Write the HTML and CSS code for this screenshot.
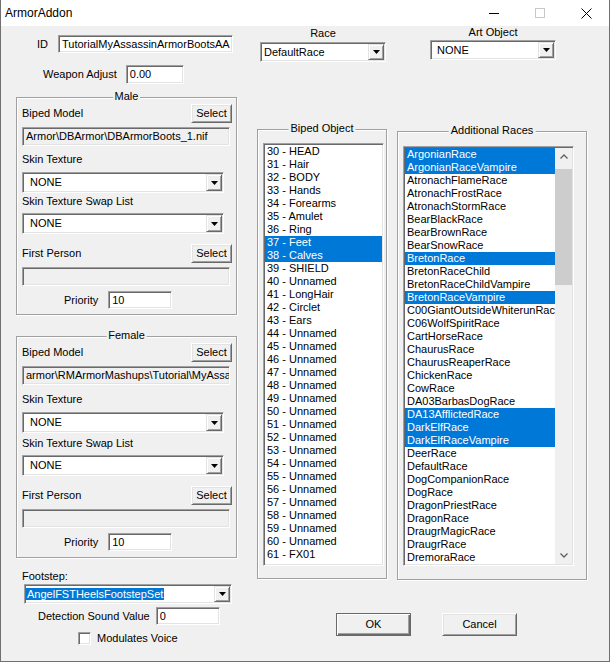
FILE: index.html
```html
<!DOCTYPE html>
<html lang="en">
<head>
    <meta charset="UTF-8">
    <title>ArmorAddon</title>
    <link rel="stylesheet" href="styles.css">
</head>
<body>
<div class="window">
    <div class="titlebar">
        <span class="title">ArmorAddon</span>
        <div class="caption">
            <span class="cap"><svg width="10" height="10" viewBox="0 0 10 10"><path d="M0 5.5h10" stroke="#000" stroke-width="1"/></svg></span>
            <span class="cap"><svg width="10" height="10" viewBox="0 0 10 10"><rect x="0.5" y="0.5" width="9" height="9" fill="none" stroke="#c8c8c8"/></svg></span>
            <span class="cap"><svg width="11" height="11" viewBox="0 0 11 11"><path d="M0.5 0.5L10.5 10.5M10.5 0.5L0.5 10.5" stroke="#000" stroke-width="1"/></svg></span>
        </div>
    </div>

    <div class="client">
        <div class="left">
            <div class="field-row id-row">
                <span>ID</span>
                <div class="edit edit-id">TutorialMyAssassinArmorBootsAA</div>
            </div>
            <div class="field-row weapon-row">
                <span>Weapon Adjust</span>
                <div class="edit edit-weapon">0.00</div>
            </div>

            <div class="group model-group">
                <span class="group-title">Male</span>
                <div class="head-row"><span>Biped Model</span><div class="btn btn-select">Select</div></div>
                <div class="edit path">Armor\DBArmor\DBArmorBoots_1.nif</div>
                <div class="sub-label">Skin Texture</div>
                <div class="combo combo-wide"><span class="combo-text">NONE</span><span class="drop"><svg width="7" height="4" viewBox="0 0 7 4"><path d="M0 0h7L3.5 4z"/></svg></span></div>
                <div class="sub-label sub-label-tight">Skin Texture Swap List</div>
                <div class="combo combo-wide combo-second"><span class="combo-text">NONE</span><span class="drop"><svg width="7" height="4" viewBox="0 0 7 4"><path d="M0 0h7L3.5 4z"/></svg></span></div>
                <div class="head-row head-row-fp"><span>First Person</span><div class="btn btn-select">Select</div></div>
                <div class="edit path"></div>
                <div class="field-row priority-row">
                    <span>Priority</span>
                    <div class="edit edit-priority">10</div>
                </div>
            </div>

            <div class="group model-group female">
                <span class="group-title">Female</span>
                <div class="head-row"><span>Biped Model</span><div class="btn btn-select">Select</div></div>
                <div class="edit path">armor\RMArmorMashups\Tutorial\MyAssassinArmorBoots_1.nif</div>
                <div class="sub-label">Skin Texture</div>
                <div class="combo combo-wide"><span class="combo-text">NONE</span><span class="drop"><svg width="7" height="4" viewBox="0 0 7 4"><path d="M0 0h7L3.5 4z"/></svg></span></div>
                <div class="sub-label sub-label-tight">Skin Texture Swap List</div>
                <div class="combo combo-wide combo-second"><span class="combo-text">NONE</span><span class="drop"><svg width="7" height="4" viewBox="0 0 7 4"><path d="M0 0h7L3.5 4z"/></svg></span></div>
                <div class="head-row head-row-fp"><span>First Person</span><div class="btn btn-select">Select</div></div>
                <div class="edit path"></div>
                <div class="field-row priority-row">
                    <span>Priority</span>
                    <div class="edit edit-priority">10</div>
                </div>
            </div>

            <div class="footstep-label">Footstep:</div>
            <div class="combo combo-foot"><span class="combo-text"><span class="hl">AngelFSTHeelsFootstepSet</span></span><span class="drop"><svg width="7" height="4" viewBox="0 0 7 4"><path d="M0 0h7L3.5 4z"/></svg></span></div>
            <div class="field-row detect-row">
                <span>Detection Sound Value</span>
                <div class="edit edit-priority">0</div>
            </div>
            <div class="check-row">
                <span class="check"></span>
                <span>Modulates Voice</span>
            </div>
        </div>

        <div class="right">
            <div class="top-row">
                <div class="picker race-picker">
                    <div class="picker-label">Race</div>
                    <div class="combo"><span class="combo-text">DefaultRace</span><span class="drop"><svg width="7" height="4" viewBox="0 0 7 4"><path d="M0 0h7L3.5 4z"/></svg></span></div>
                </div>
                <div class="picker art-picker">
                    <div class="picker-label">Art Object</div>
                    <div class="combo"><span class="combo-text">NONE</span><span class="drop"><svg width="7" height="4" viewBox="0 0 7 4"><path d="M0 0h7L3.5 4z"/></svg></span></div>
                </div>
            </div>

            <div class="lists-row">
                <div class="group biped-group">
                    <span class="group-title">Biped Object</span>
                    <div class="list biped-list">
                        <div class="items">
                            <div class="item">30 - HEAD</div>
                            <div class="item">31 - Hair</div>
                            <div class="item">32 - BODY</div>
                            <div class="item">33 - Hands</div>
                            <div class="item">34 - Forearms</div>
                            <div class="item">35 - Amulet</div>
                            <div class="item">36 - Ring</div>
                            <div class="item sel">37 - Feet</div>
                            <div class="item sel">38 - Calves</div>
                            <div class="item">39 - SHIELD</div>
                            <div class="item">40 - Unnamed</div>
                            <div class="item">41 - LongHair</div>
                            <div class="item">42 - Circlet</div>
                            <div class="item">43 - Ears</div>
                            <div class="item">44 - Unnamed</div>
                            <div class="item">45 - Unnamed</div>
                            <div class="item">46 - Unnamed</div>
                            <div class="item">47 - Unnamed</div>
                            <div class="item">48 - Unnamed</div>
                            <div class="item">49 - Unnamed</div>
                            <div class="item">50 - Unnamed</div>
                            <div class="item">51 - Unnamed</div>
                            <div class="item">52 - Unnamed</div>
                            <div class="item">53 - Unnamed</div>
                            <div class="item">54 - Unnamed</div>
                            <div class="item">55 - Unnamed</div>
                            <div class="item">56 - Unnamed</div>
                            <div class="item">57 - Unnamed</div>
                            <div class="item">58 - Unnamed</div>
                            <div class="item">59 - Unnamed</div>
                            <div class="item">60 - Unnamed</div>
                            <div class="item">61 - FX01</div>
                        </div>
                    </div>
                </div>

                <div class="group races-group">
                    <span class="group-title">Additional Races</span>
                    <div class="list races-list">
                        <div class="items">
                            <div class="item sel">ArgonianRace</div>
                            <div class="item sel">ArgonianRaceVampire</div>
                            <div class="item">AtronachFlameRace</div>
                            <div class="item">AtronachFrostRace</div>
                            <div class="item">AtronachStormRace</div>
                            <div class="item">BearBlackRace</div>
                            <div class="item">BearBrownRace</div>
                            <div class="item">BearSnowRace</div>
                            <div class="item sel">BretonRace</div>
                            <div class="item">BretonRaceChild</div>
                            <div class="item">BretonRaceChildVampire</div>
                            <div class="item sel">BretonRaceVampire</div>
                            <div class="item">C00GiantOutsideWhiterunRace</div>
                            <div class="item">C06WolfSpiritRace</div>
                            <div class="item">CartHorseRace</div>
                            <div class="item">ChaurusRace</div>
                            <div class="item">ChaurusReaperRace</div>
                            <div class="item">ChickenRace</div>
                            <div class="item">CowRace</div>
                            <div class="item">DA03BarbasDogRace</div>
                            <div class="item sel">DA13AfflictedRace</div>
                            <div class="item sel">DarkElfRace</div>
                            <div class="item sel">DarkElfRaceVampire</div>
                            <div class="item">DeerRace</div>
                            <div class="item">DefaultRace</div>
                            <div class="item">DogCompanionRace</div>
                            <div class="item">DogRace</div>
                            <div class="item">DragonPriestRace</div>
                            <div class="item">DragonRace</div>
                            <div class="item">DraugrMagicRace</div>
                            <div class="item">DraugrRace</div>
                            <div class="item">DremoraRace</div>
                        </div>
                        <div class="scrollbar">
                            <span class="sb-arrow"><svg width="8" height="5" viewBox="0 0 8 5"><path d="M0.5 4.5L4 1L7.5 4.5" fill="none" stroke="#606060" stroke-width="1.3"/></svg></span>
                            <span class="sb-thumb"></span>
                            <span class="sb-track"></span>
                            <span class="sb-arrow"><svg width="8" height="5" viewBox="0 0 8 5"><path d="M0.5 0.5L4 4L7.5 0.5" fill="none" stroke="#606060" stroke-width="1.3"/></svg></span>
                        </div>
                    </div>
                </div>
            </div>

            <div class="dialog-buttons">
                <div class="btn btn-dialog btn-default">OK</div>
                <div class="btn btn-dialog">Cancel</div>
            </div>
        </div>
    </div>
</div>
</body>
</html>
```

FILE: styles.css
```css
* {
    box-sizing: border-box;
}
body {
    margin: 0;
    background: #fff;
    color: #000;
    font-family: "Liberation Sans", Arial, sans-serif;
    font-size: 11px;
    line-height: 13px;
}
.window {
    width: 610px;
    height: 662px;
    background: #f0f0f0;
    border: 1px solid #707070;
    border-top: none;
    display: flex;
    flex-direction: column;
}

/* title bar */
.titlebar {
    height: 26px;
    flex-shrink: 0;
    background: #fff;
    display: flex;
    align-items: center;
    justify-content: space-between;
}
.title {
    font-size: 12px;
    padding-left: 4px;
}
.caption {
    display: flex;
    align-self: stretch;
}
.cap {
    width: 46px;
    display: flex;
    align-items: center;
    justify-content: center;
}

/* common controls */
.edit,
.combo,
.list,
.check {
    background: #fff;
    border: 1px solid;
    border-color: #a0a0a0 #fff #fff #a0a0a0;
    box-shadow: inset 1px 1px #696969, inset -1px -1px #e3e3e3;
}
.edit {
    display: flex;
    align-items: center;
    padding-left: 3px;
    white-space: nowrap;
    overflow: hidden;
}
.combo {
    display: flex;
    align-items: center;
    height: 20px;
}
.combo-text {
    flex: 1;
    padding-left: 6px;
    white-space: nowrap;
    overflow: hidden;
}
.drop {
    width: 16px;
    align-self: stretch;
    margin: 1px 1px 1px 0;
    display: flex;
    align-items: center;
    justify-content: center;
    background: #f0f0f0;
    border: 1px solid;
    border-color: #e3e3e3 #696969 #696969 #e3e3e3;
    box-shadow: inset 1px 1px #fff, inset -1px -1px #a0a0a0;
}
.btn {
    display: flex;
    align-items: center;
    justify-content: center;
    background: #f0f0f0;
    border: 1px solid;
    border-color: #fff #696969 #696969 #fff;
    box-shadow: inset 1px 1px #e3e3e3, inset -1px -1px #a0a0a0;
}
.group {
    position: relative;
    border: 1px solid #a0a0a0;
    box-shadow: inset 1px 1px #fff, 1px 1px #fff;
}
.group-title {
    position: absolute;
    top: -8px;
    left: 50%;
    transform: translateX(-50%);
    padding: 0 2px;
    background: #f0f0f0;
    white-space: nowrap;
}
.field-row {
    display: flex;
    align-items: center;
}

/* left column */
.client {
    display: flex;
    flex: 1;
}
.left {
    margin-left: 15px;
    width: 221px;
}
.id-row {
    margin-top: 9px;
    padding-left: 21px;
    gap: 10px;
}
.edit-id {
    width: 175px;
    height: 18px;
}
.weapon-row {
    margin-top: 12px;
    padding-left: 27px;
    gap: 9px;
}
.edit-weapon {
    width: 58px;
    height: 19px;
}
.model-group {
    margin-top: 13px;
    width: 221px;
    padding: 5px 4px 5px 5px;
}
.model-group.female {
    margin-top: 21px;
    padding-bottom: 6px;
}
.head-row {
    display: flex;
    justify-content: space-between;
    align-items: center;
    height: 21px;
}
.btn-select {
    width: 41px;
    height: 19px;
}
.path {
    width: 208px;
    height: 19px;
    margin-top: 3px;
    background: #f0f0f0;
}
.sub-label {
    margin-top: 7px;
}
.sub-label-tight {
    margin-top: 2px;
}
.combo-wide {
    width: 202px;
    height: 21px;
    margin-top: 6px;
}
.combo-wide .combo-text {
    padding-left: 7px;
}
.combo-second {
    margin-top: 5px;
}
.head-row-fp {
    margin-top: 9px;
}
.priority-row {
    margin-top: 5px;
    padding-left: 42px;
    gap: 10px;
}
.edit-priority {
    width: 64px;
    height: 18px;
}
.female .sub-label {
    margin-top: 8px;
}
.female .sub-label-tight {
    margin-top: 4px;
}
.footstep-label {
    margin-top: 12px;
    padding-left: 6px;
}
.combo-foot {
    width: 208px;
    margin: 1px 0 0 8px;
}
.combo-foot .combo-text {
    padding-left: 1px;
}
.hl {
    background: #0078d7;
    color: #fff;
    padding: 0 1px;
}
.detect-row {
    margin-top: 3px;
    padding-left: 22px;
    gap: 6px;
}
.check-row {
    display: flex;
    align-items: center;
    gap: 6px;
    margin-top: 7px;
    padding-left: 62px;
}
.check {
    width: 13px;
    height: 13px;
}

/* right side */
.right {
    margin-left: 20px;
    width: 330px;
}
.top-row {
    display: flex;
    align-items: flex-start;
}
.picker {
    width: 126px;
}
.picker-label {
    text-align: center;
}
.race-picker {
    margin: 1px 0 0 3px;
}
.race-picker .combo {
    margin-top: 2px;
}
.race-picker .combo-text {
    padding-left: 3px;
}
.art-picker {
    margin-left: 44px;
}
.art-picker .combo {
    margin-top: 1px;
}
.lists-row {
    display: flex;
    align-items: flex-start;
    margin-top: 67px;
}
.biped-group {
    width: 130px;
    height: 450px;
    padding: 13px 0 0 5px;
}
.races-group {
    width: 190px;
    height: 449px;
    margin: 2px 0 0 10px;
    padding: 14px 0 0 5px;
}
.list {
    display: flex;
    padding: 1px;
    overflow: hidden;
}
.biped-list {
    width: 121px;
    height: 423px;
}
.races-list {
    width: 171px;
    height: 420px;
}
.items {
    flex: 1;
    min-width: 0;
}
.item {
    height: 13px;
    padding-left: 2px;
    white-space: nowrap;
    overflow: hidden;
}
.item.sel {
    background: #0078d7;
    color: #fff;
}
.scrollbar {
    width: 17px;
    display: flex;
    flex-direction: column;
    background: #f0f0f0;
}
.sb-arrow {
    height: 17px;
    display: flex;
    align-items: center;
    justify-content: center;
}
.sb-thumb {
    height: 116px;
    margin-top: 4px;
    background: #cdcdcd;
}
.sb-track {
    flex: 1;
}
.dialog-buttons {
    display: flex;
    gap: 31px;
    margin-top: 33px;
    padding-left: 79px;
}
.btn-dialog {
    width: 75px;
    height: 23px;
}
.btn-default {
    border-color: #696969;
    box-shadow: inset 1px 1px #fff, inset -1px -1px #696969, inset -2px -2px #a0a0a0;
}
```
